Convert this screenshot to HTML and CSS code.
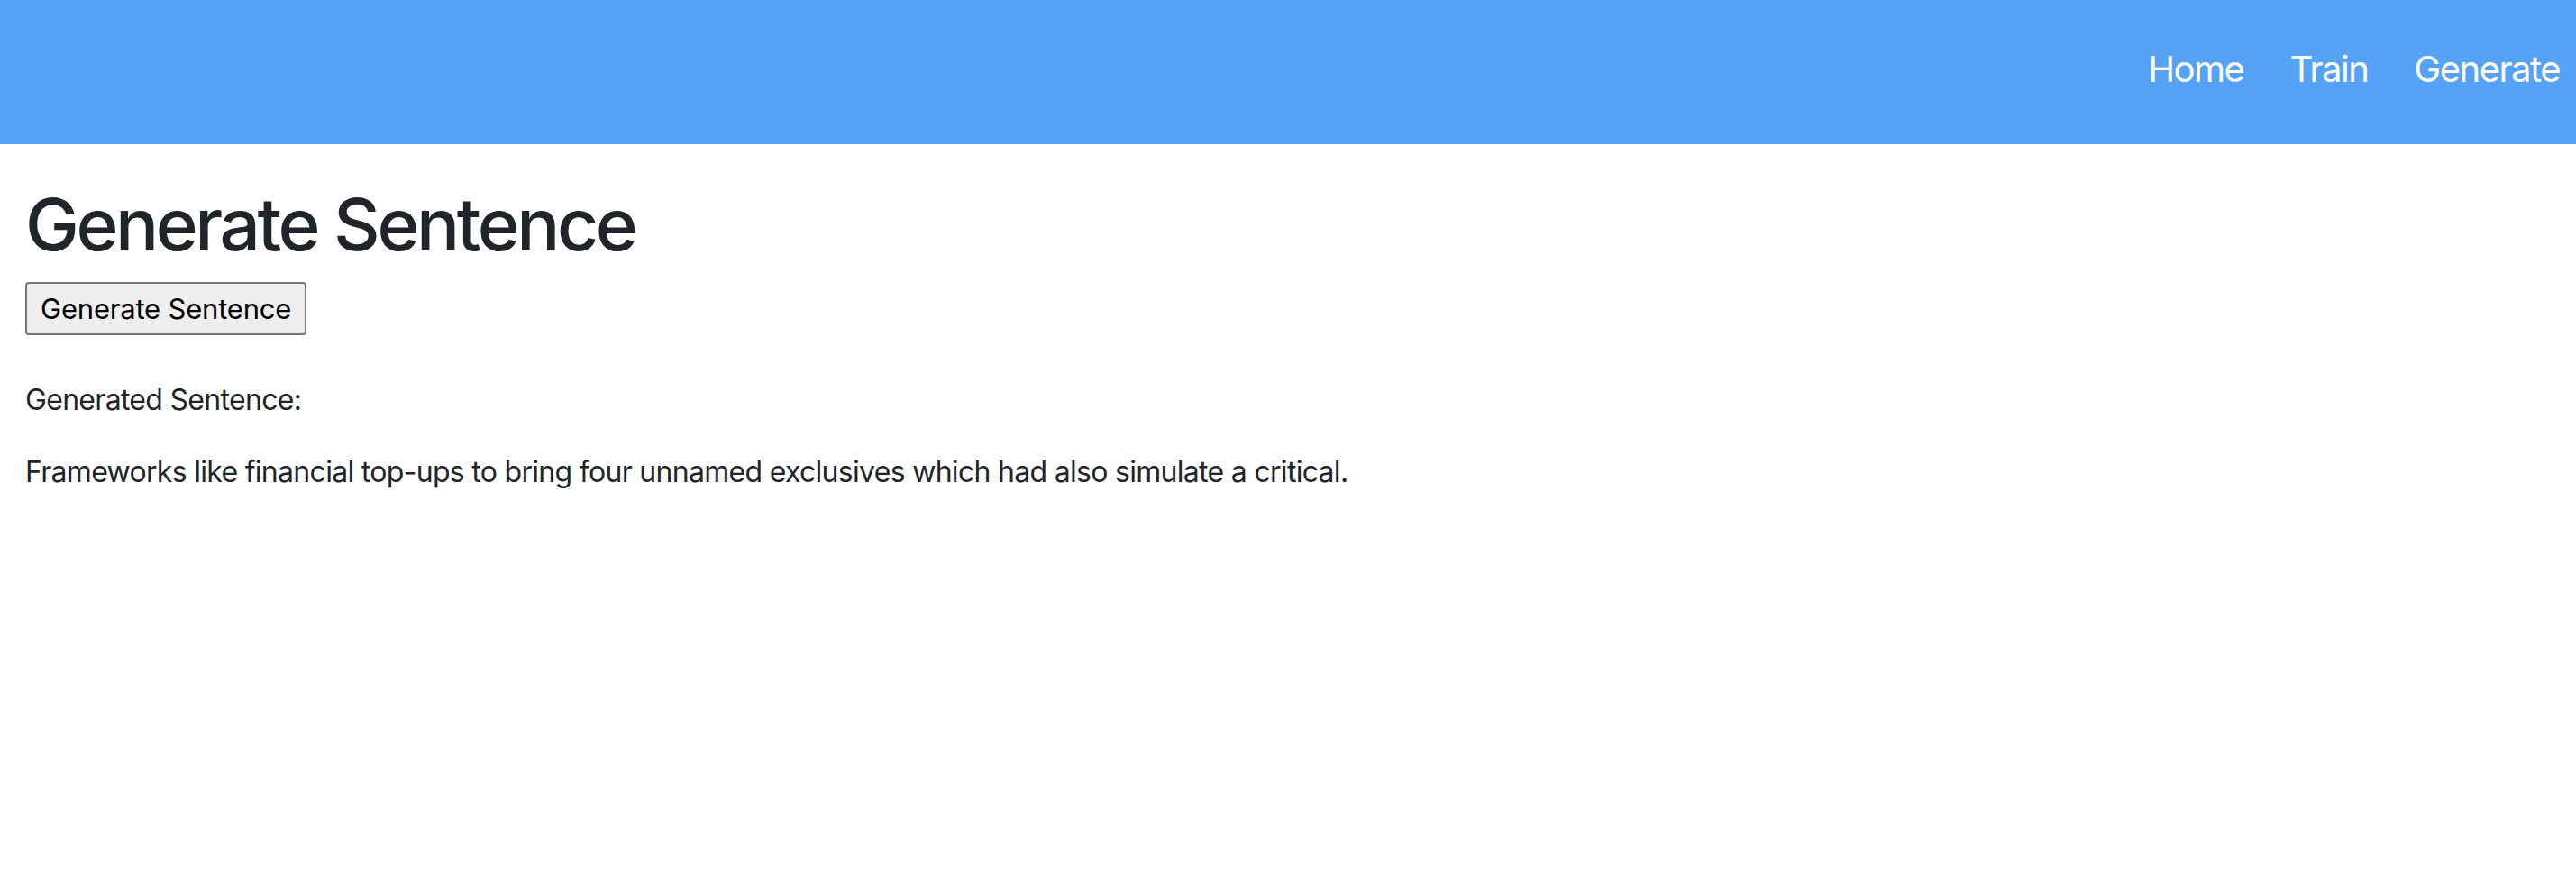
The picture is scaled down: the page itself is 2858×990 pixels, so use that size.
FILE: index.html
```html
<!DOCTYPE html>
<html lang="en">
<head>
<meta charset="utf-8">
<title>Generate Sentence</title>
<link rel="stylesheet" href="styles.css">
</head>
<body>
<header class="topbar">
  <nav class="nav">
    <a class="nav-link" href="#">Home</a>
    <a class="nav-link" href="#">Train</a>
    <a class="nav-link" href="#">Generate</a>
  </nav>
</header>
<main class="content">
  <h1 class="title">Generate Sentence</h1>
  <div class="actions">
    <button class="gen-btn" type="button">Generate Sentence</button>
  </div>
  <p class="label">Generated Sentence:</p>
  <p class="sentence">Frameworks like financial top-ups to bring four unnamed exclusives which had also simulate a critical.</p>
</main>
</body>
</html>
```
FILE: styles.css
```css
html, body {
  margin: 0;
  padding: 0;
  background: #ffffff;
}
body {
  font-family: Inter, "Noto Sans", "Liberation Sans", sans-serif;
  color: #212529;
  font-size: 32px;
  line-height: 1.5;
  letter-spacing: -0.7px;
}
.topbar {
  height: 160px;
  background: #56a2f7;
  display: flex;
  align-items: center;
  justify-content: flex-end;
}
.nav {
  display: flex;
  gap: 51px;
  padding-right: 18px;
  padding-bottom: 6px;
}
.nav-link {
  color: #ffffff;
  text-decoration: none;
  font-size: 40px;
  line-height: 1.2;
  letter-spacing: -1.5px;
}
.content {
  padding: 41px 28px 0 28px;
}
.title {
  margin: 0 0 16px 0;
  font-size: 80px;
  font-weight: 500;
  line-height: 1.2;
  letter-spacing: -3.4px;
  color: #212529;
}
.actions {
  margin-bottom: 48px;
}
.gen-btn {
  font-family: Inter, "Noto Sans", "Liberation Sans", sans-serif;
  font-size: 31px;
  line-height: 1.2;
  letter-spacing: -0.2px;
  color: #000000;
  background: #efefef;
  border: 2px solid #767676;
  border-radius: 4px;
  padding: 9px 15px;
  height: 59px;
}
.label, .sentence {
  margin: 0 0 32px 0;
}
```
